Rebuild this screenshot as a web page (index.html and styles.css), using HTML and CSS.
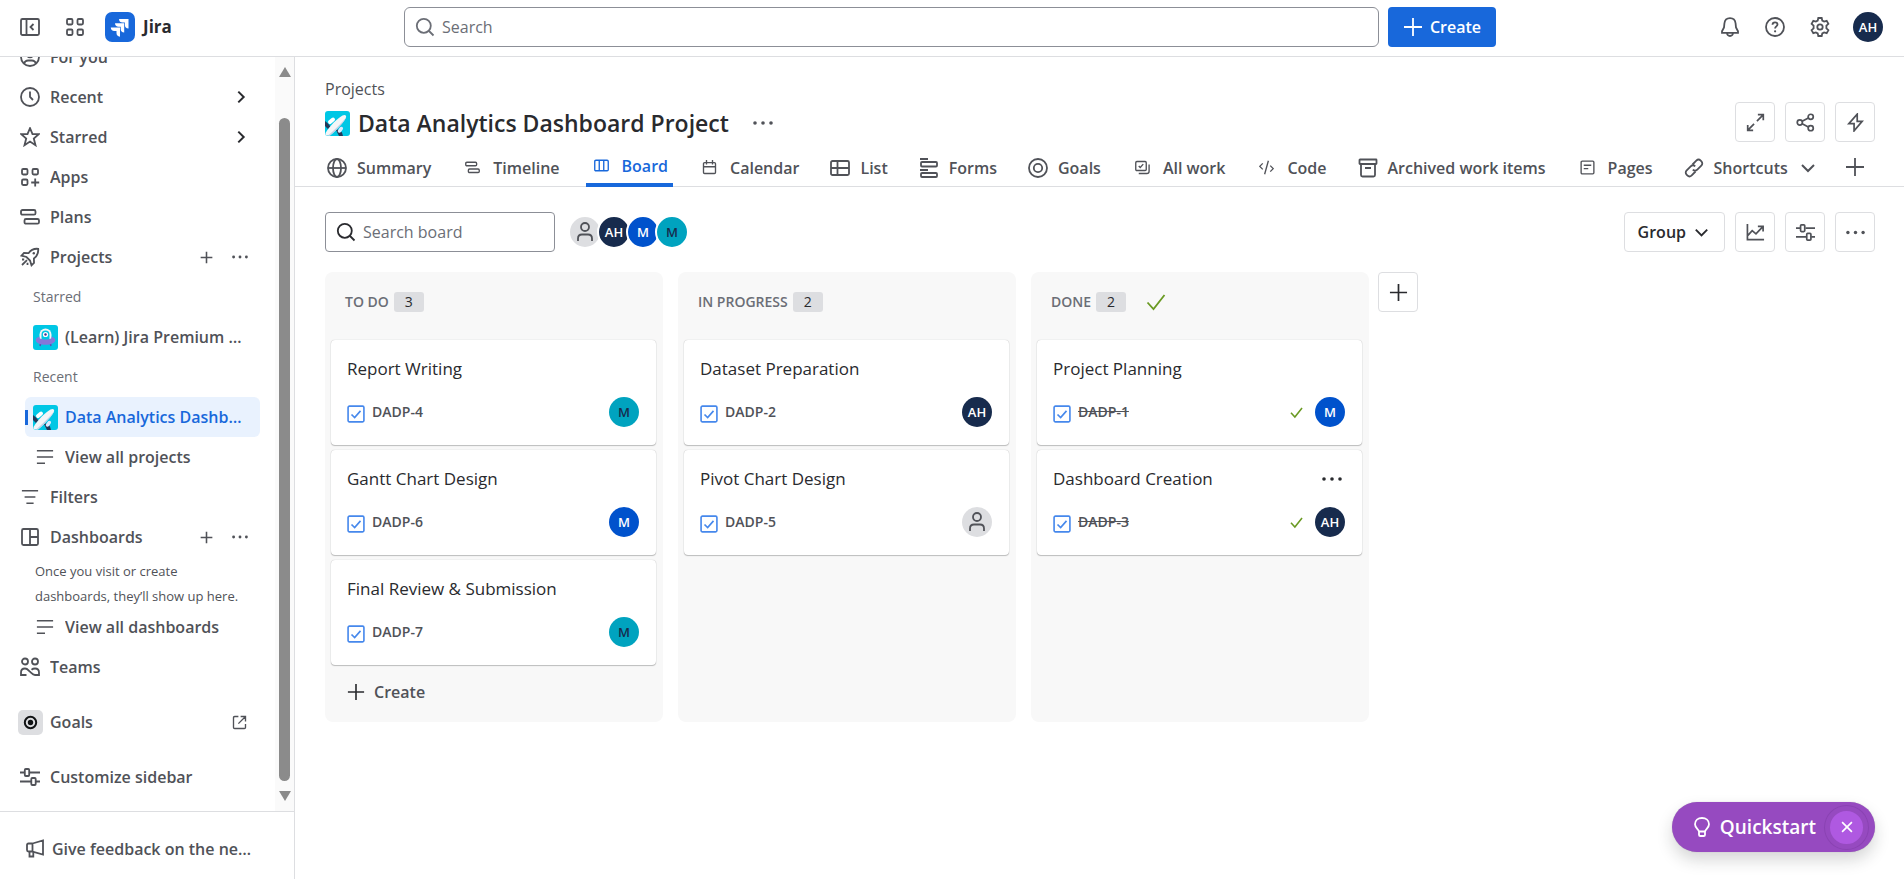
FILE: index.html
```html
<!DOCTYPE html>
<html lang="en">
<head>
<meta charset="utf-8">
<title>Data Analytics Dashboard Project - Board - Jira</title>
<link rel="stylesheet" href="styles.css">
</head>
<body>
<svg class="sprite" aria-hidden="true">
  <symbol id="collapse" viewBox="0 0 20 20"><rect x="1" y="2" width="18" height="16" rx="1.500"/><path d="M6.500 2v16M13.500 7l-3 3 3 3"/></symbol>
  <symbol id="grid" viewBox="0 0 20 20"><rect x="2" y="2" width="5.500" height="5.500" rx="1.200"/><rect x="12.500" y="2" width="5.500" height="5.500" rx="1.200"/><rect x="2" y="12.500" width="5.500" height="5.500" rx="1.200"/><rect x="12.500" y="12.500" width="5.500" height="5.500" rx="1.200"/></symbol>
  <symbol id="apps" viewBox="0 0 20 20"><rect x="2" y="2" width="5.500" height="5.500" rx="1.200"/><rect x="12.500" y="2" width="5.500" height="5.500" rx="1.200"/><rect x="2" y="12.500" width="5.500" height="5.500" rx="1.200"/><path d="M15.200 11.500v8M11.200 15.500h8"/></symbol>
  <symbol id="search" viewBox="0 0 20 20"><circle cx="8.800" cy="8.800" r="7"/><path d="M14 14l4.500 4.500"/></symbol>
  <symbol id="plus" viewBox="0 0 20 20"><path d="M10 1v18M1 10h18"/></symbol>
  <symbol id="bell" viewBox="0 0 20 20"><path d="M10 1.200c-3.400 0-5.300 2.400-5.600 5.300L4 10.500 2 14.300v1.500h16v-1.500l-2-3.800-.4-4C15.300 3.600 13.400 1.200 10 1.200zM7 16c.2 2 1.300 3 3 3s2.800-1 3-3"/></symbol>
  <symbol id="help" viewBox="0 0 20 20"><circle cx="10" cy="10" r="9"/><path d="M7.500 7.800c0-1.600 1.100-2.500 2.500-2.500s2.500.9 2.500 2.200c0 1.900-2.400 1.900-2.400 4"/><circle class="solid" cx="10.100" cy="14.300" r="1.100"/></symbol>
  <symbol id="gear" viewBox="0 0 20 20"><path d="M8.300 1h3.400l.6 2.600 1.800 1 2.600-.8 1.700 3-2 1.900v2.600l2 1.900-1.700 3-2.600-.8-1.800 1-.6 2.600H8.300l-.6-2.600-1.800-1-2.600.8-1.700-3 2-1.900V8.700l-2-1.900 1.700-3 2.600.8 1.800-1z"/><circle cx="10" cy="10" r="2.700"/></symbol>
  <symbol id="person" viewBox="0 0 20 20"><circle cx="10" cy="5" r="4"/><path d="M3 19v-2.500C3 14 4.500 12.500 7 12.500h6c2.500 0 4 1.500 4 4V19"/></symbol>
  <symbol id="foryou" viewBox="0 0 20 20"><circle cx="10" cy="10" r="9"/><circle cx="10" cy="7.500" r="2.800"/><path d="M4 16.500c1-2.500 2.500-3 4-3h4c1.500 0 3 .5 4 3"/></symbol>
  <symbol id="clock" viewBox="0 0 20 20"><circle cx="10" cy="10" r="9"/><path d="M10 4.500V10l3 3"/></symbol>
  <symbol id="star" viewBox="0 0 20 20"><path d="M10 1.200l2.500 6h6.200l-4.900 4.300 1.700 6.700L10 14.500l-5.500 3.700 1.700-6.700L1.300 7.200h6.200z"/></symbol>
  <symbol id="plans" viewBox="0 0 20 20"><rect x="1" y="3" width="14.500" height="4.700" rx="1.500"/><rect x="4.500" y="12" width="14.500" height="4.700" rx="1.500"/></symbol>
  <symbol id="rocket" viewBox="0 0 20 20"><path d="M18.200 1.800c-4.500-.4-7.200.7-9.700 4.400L4 6 1.500 8.700l5 1.300 3.500 3.500 1.500 4.800 2.500-2.500-.1-4.400c3.700-2.500 4.700-5.200 4.300-9.600zM2 12.500h2.200M2 18l5-4.800M7.500 18v-2.200"/><circle class="solid" cx="13.800" cy="6.200" r="1.200"/></symbol>
  <symbol id="lines" viewBox="0 0 20 20"><path d="M1 3h18M1 10h18M1 17h9"/></symbol>
  <symbol id="filter" viewBox="0 0 20 20"><path d="M1 3h18M4 10h12M6 17h8"/></symbol>
  <symbol id="dash" viewBox="0 0 20 20"><rect x="2" y="2" width="16" height="16" rx="1.500"/><path d="M10 2v16M10 10h8"/></symbol>
  <symbol id="teams" viewBox="0 0 20 20"><circle cx="5" cy="4.500" r="3"/><circle cx="15" cy="4.500" r="3"/><path d="M6.500 18H1v-2.500C1 13 2.500 11.500 5 11.500s3 1.300 5 3.200 3 3.300 5 3.300h4v-2.500c0-2.500-1.500-4-4-4-1.500 0-2.500.4-3.500 1.200"/></symbol>
  <symbol id="sliders" viewBox="0 0 20 20"><path d="M0 5.500h4.500M10 5.500h10M0 14.500h11M16 14.500h4"/><rect x="4.800" y="2" width="4.400" height="7" rx="1"/><rect x="11.300" y="11" width="4.400" height="7" rx="1"/></symbol>
  <symbol id="external" viewBox="0 0 20 20"><path d="M8.500 2H3.500C2.500 2 2 2.500 2 3.500v13c0 1 .5 1.500 1.500 1.500h13c1 0 1.500-.5 1.500-1.500v-4.500M11.500 2H18v6.500M18 2l-9.500 9.500"/></symbol>
  <symbol id="mega" viewBox="0 0 20 20"><path d="M7.500 4.500 18 1.500v14l-10.500-3zM7.500 4.500H3.500C2.500 4.500 2 5 2 6v5c0 1 .5 1.500 1.500 1.500h4M4.500 12.500v5h3.800v-4.800M7.500 4.500v8"/></symbol>
  <symbol id="right" viewBox="0 0 20 20"><path d="M7 4l6 6-6 6"/></symbol>
  <symbol id="down" viewBox="0 0 20 20"><path d="M4 7l6 6 6-6"/></symbol>
  <symbol id="dots" viewBox="0 0 20 20"><circle class="solid" cx="2" cy="10" r="1.800"/><circle class="solid" cx="10" cy="10" r="1.800"/><circle class="solid" cx="18" cy="10" r="1.800"/></symbol>
  <symbol id="globe" viewBox="0 0 20 20"><circle cx="10" cy="10" r="9"/><ellipse cx="10" cy="10" rx="4" ry="9"/><path d="M1 10h18"/></symbol>
  <symbol id="columns" viewBox="0 0 20 20"><rect x="1" y="3" width="18" height="14" rx="1.500"/><path d="M7 3v14M13 3v14"/></symbol>
  <symbol id="calendar" viewBox="0 0 20 20"><rect x="2" y="3.500" width="16" height="14.500" rx="1.500"/><path d="M2 9h16M6 0v6M14 0v6"/></symbol>
  <symbol id="list" viewBox="0 0 20 20"><rect x="1" y="3" width="18" height="14" rx="1.500"/><path d="M1 10h18M7.500 3v14"/></symbol>
  <symbol id="forms" viewBox="0 0 20 20"><path d="M1 1h8M1 12h8"/><rect x="2" y="4" width="16" height="4.500" rx="1"/><rect x="2" y="15" width="16" height="4" rx="1"/></symbol>
  <symbol id="goal" viewBox="0 0 20 20"><circle cx="10" cy="10" r="9"/><circle cx="10" cy="10" r="4.200"/></symbol>
  <symbol id="allwork" viewBox="0 0 20 20"><rect x="1" y="2" width="14" height="12" rx="1.500"/><path d="M5 8l2 2 4-4.500M18.800 6v9c0 2-1 3-3 3H5"/></symbol>
  <symbol id="code" viewBox="0 0 20 20"><path d="M5 4.500 1 8.500l4 4M15 7.500l4 4-4 4M12.500 1l-5 18"/></symbol>
  <symbol id="archive" viewBox="0 0 20 20"><rect x="1.500" y="1.500" width="17" height="4.500" rx=".5"/><path d="M3 6v11c0 1 .5 1.500 1.500 1.500h11c1 0 1.500-.5 1.500-1.500V6M7 10h6"/></symbol>
  <symbol id="page" viewBox="0 0 20 20"><rect x="1.500" y="1.500" width="17" height="17" rx="1.500"/><path d="M5 7h10M5 11.500h6"/></symbol>
  <symbol id="link" viewBox="0 0 20 20"><path d="M8.500 6.500l3.800-3.800c1.300-1.300 3.200-1.300 4.400-.1l.7.700c1.200 1.200 1.200 3.100-.1 4.400l-4 4c-1.300 1.300-3.200 1.300-4.500 0M11.500 13.500l-3.800 3.800c-1.300 1.300-3.200 1.300-4.400.1l-.7-.7c-1.200-1.200-1.200-3.100.1-4.400l4-4c1.300-1.300 3.200-1.300 4.500 0"/></symbol>
  <symbol id="expand" viewBox="0 0 20 20"><path d="M12.500 1.800h5.700v5.700M18 2l-6.500 6.500M7.500 18.200H1.800v-5.700M2 18l6.500-6.500"/></symbol>
  <symbol id="share" viewBox="0 0 20 20"><circle cx="4" cy="10" r="2.700"/><circle cx="15.500" cy="4" r="2.700"/><circle cx="15.500" cy="16" r="2.700"/><path d="M6.500 8.800l6.500-3.500M6.500 11.200l6.500 3.500"/></symbol>
  <symbol id="bolt" viewBox="0 0 20 20"><path d="M11.800 1.200v7.600H17L8.500 18.800v-7.600H3z"/></symbol>
  <symbol id="chart" viewBox="0 0 20 20"><path d="M1.500 1v16.500H19M1.500 13.500l5-5.500 4 3.500 7-7.500M12.500 3.500H18V9"/></symbol>
  <symbol id="check" viewBox="0 0 20 20"><path d="M1.500 10.500l6 6.500 11-14"/></symbol>
  <symbol id="task" viewBox="0 0 20 20"><rect x="1.200" y="1.200" width="17.600" height="17.600" rx="1.500"/><path d="M5 10.500l3.500 3.500L15 6.500"/></symbol>
  <symbol id="bulb" viewBox="0 0 20 20"><path d="M7 14.500C6.500 12 3 11 3 7.300 3 3.500 6 1 10 1s7 2.500 7 6.300c0 3.700-3.500 4.700-4 7.200zM7 14.500v3.200c0 1 .4 1.300 1.300 1.300h3.400c.9 0 1.300-.3 1.300-1.300v-3.200"/></symbol>
  <symbol id="close" viewBox="0 0 20 20"><path d="M3 3l14 14M17 3L3 17"/></symbol>
  <symbol id="plane" viewBox="0 0 25 25"><rect class="sky" width="25" height="25" rx="3"/><path fill="#253858" d="M0 10l3 2.500 2.500 3L3 18l-3-3zM11 19l2.500-.5 3.500 3 1 3.500h-4z"/><path stroke="#fff" stroke-width="4" stroke-linecap="round" d="M5 11l3-2.500"/><path stroke="#deebff" stroke-width="3.500" stroke-linecap="round" d="M14.500 20l1.800-2.500"/><path fill="#f4f5f7" d="M.5 24.500V22C5 15 11.500 8 17.500 4.600c2.800-1.500 4.500 0 3.200 2.700C17.500 13 10.500 20 5 24.500z"/><path fill="#c5d0e6" d="M3 24.500C9.500 19 16 12.500 20.800 7 17.500 13 10.500 20 5 24.500z"/></symbol>
  <symbol id="ufo" viewBox="0 0 25 25"><rect class="sky" width="25" height="25" rx="3"/><path stroke="#5e4db2" stroke-width="1.500" d="M8 17l-1 4M17 17l1 4"/><path fill="#f4f5f7" d="M6.500 14V9.500a6 6 0 0 1 12 0V14z"/><path fill="#00c7e5" d="M8.500 14V9.500a4 4 0 0 1 8 0V14z"/><path fill="#8777d9" d="M6.500 11.500C4 12.300 2.700 13.600 2.700 15c0 2.700 4.400 4.800 9.800 4.800s9.800-2.100 9.800-4.800c0-1.400-1.300-2.700-3.800-3.500v1.700c-2.500 1.700-9.500 1.700-12 0z"/><circle cx="12.500" cy="9.500" r="2.600" fill="#fff"/><circle cx="12.500" cy="9.500" r="1.200" fill="#403294"/></symbol>
</svg>

<header class="topbar">
  <div class="brand">
    <button class="plain" aria-label="Collapse sidebar"><svg class="icon"><use href="#collapse"/></svg></button>
    <button class="plain" aria-label="Switch apps"><svg class="icon"><use href="#grid"/></svg></button>
    <a class="logo" href="#"><svg class="logo-mark" viewBox="0 0 30 30"><rect width="30" height="30" rx="7"/><path d="M14 7h9.500v9.500c-2.400 0-3.600-1.500-3.600-3.600v-2.300h-2.300C15.500 10.600 14 9.400 14 7z"/><path d="M10 11.200h9.200v9.300c-2.300 0-3.500-1.500-3.500-3.600v-2.200h-2.200c-2.100 0-3.500-1.200-3.500-3.500z"/><path d="M5.800 15.400H15v9.300c-2.300 0-3.500-1.500-3.500-3.600v-2.200H9.300c-2.100 0-3.500-1.200-3.500-3.500z"/></svg>Jira</a>
  </div>
  <div class="top-middle">
    <label class="field top-search"><svg class="icon"><use href="#search"/></svg><input type="search" placeholder="Search" aria-label="Search"></label>
    <button class="create"><svg class="icon"><use href="#plus"/></svg>Create</button>
  </div>
  <div class="top-actions">
    <button class="plain" aria-label="Notifications"><svg class="icon"><use href="#bell"/></svg></button>
    <button class="plain" aria-label="Help"><svg class="icon"><use href="#help"/></svg></button>
    <button class="plain" aria-label="Settings"><svg class="icon"><use href="#gear"/></svg></button>
    <button class="avatar navy" aria-label="Your profile">AH</button>
  </div>
</header>

<div class="shell">
  <aside class="sidebar">
    <div class="side-scroll">
      <nav class="side-nav" aria-label="Sidebar">
        <a class="item" href="#"><svg class="icon"><use href="#foryou"/></svg><span>For you</span></a>
        <a class="item" href="#"><svg class="icon"><use href="#clock"/></svg><span>Recent</span><svg class="icon chevron"><use href="#right"/></svg></a>
        <a class="item" href="#"><svg class="icon"><use href="#star"/></svg><span>Starred</span><svg class="icon chevron"><use href="#right"/></svg></a>
        <a class="item" href="#"><svg class="icon"><use href="#apps"/></svg><span>Apps</span></a>
        <a class="item" href="#"><svg class="icon"><use href="#plans"/></svg><span>Plans</span></a>
        <div class="item"><svg class="icon"><use href="#rocket"/></svg><a href="#">Projects</a><button class="plain" aria-label="Create project"><svg class="icon mini"><use href="#plus"/></svg></button><button class="plain" aria-label="More project actions"><svg class="icon mini-dots"><use href="#dots"/></svg></button></div>
        <h2 class="group">Starred</h2>
        <a class="item nested" href="#"><svg class="project-icon"><use href="#ufo"/></svg><span>(Learn) Jira Premium benefits</span></a>
        <h2 class="group">Recent</h2>
        <a class="item nested selected" href="#" aria-current="page"><svg class="project-icon"><use href="#plane"/></svg><span>Data Analytics Dashboard Project</span></a>
        <a class="item nested" href="#"><svg class="icon line-icon"><use href="#lines"/></svg><span>View all projects</span></a>
        <a class="item" href="#"><svg class="icon line-icon"><use href="#filter"/></svg><span>Filters</span></a>
        <div class="item"><svg class="icon"><use href="#dash"/></svg><a href="#">Dashboards</a><button class="plain" aria-label="Create dashboard"><svg class="icon mini"><use href="#plus"/></svg></button><button class="plain" aria-label="More dashboard actions"><svg class="icon mini-dots"><use href="#dots"/></svg></button></div>
        <p class="hint">Once you visit or create dashboards, they’ll show up here.</p>
        <a class="item nested" href="#"><svg class="icon line-icon"><use href="#lines"/></svg><span>View all dashboards</span></a>
        <a class="item" href="#"><svg class="icon"><use href="#teams"/></svg><span>Teams</span></a>
        <a class="item spaced" href="#"><svg class="goal-tile" viewBox="0 0 25 25"><rect width="25" height="25" rx="5" fill="#dddee1"/><circle cx="12.500" cy="12.500" r="5.700" fill="none" stroke="#101214" stroke-width="2"/><circle cx="12.500" cy="12.500" r="2.700" fill="#101214"/></svg><span>Goals</span><svg class="icon small open"><use href="#external"/></svg></a>
        <a class="item spaced" href="#"><svg class="icon"><use href="#sliders"/></svg><span>Customize sidebar</span></a>
      </nav>
      <div class="scrollbar" aria-hidden="true"><i class="arrow up"></i><i class="thumb"></i><i class="arrow down"></i></div>
    </div>
    <a class="feedback" href="#"><svg class="icon"><use href="#mega"/></svg><span>Give feedback on the new navigation</span></a>
  </aside>

  <main class="main">
    <div class="heading">
      <div>
        <a class="crumb" href="#">Projects</a>
        <div class="title-row"><svg class="project-icon"><use href="#plane"/></svg><h1>Data Analytics Dashboard Project</h1><button class="plain" aria-label="More actions"><svg class="icon"><use href="#dots"/></svg></button></div>
      </div>
      <div class="buttons">
        <button class="square" aria-label="Full screen"><svg class="icon"><use href="#expand"/></svg></button>
        <button class="square" aria-label="Share"><svg class="icon"><use href="#share"/></svg></button>
        <button class="square" aria-label="Automation"><svg class="icon"><use href="#bolt"/></svg></button>
      </div>
    </div>
    <nav class="tabs" aria-label="Project views">
      <a href="#"><svg class="icon"><use href="#globe"/></svg>Summary</a>
      <a href="#"><svg class="icon small"><use href="#plans"/></svg>Timeline</a>
      <a class="active" href="#" aria-current="page"><svg class="icon small"><use href="#columns"/></svg>Board</a>
      <a href="#"><svg class="icon small"><use href="#calendar"/></svg>Calendar</a>
      <a href="#"><svg class="icon"><use href="#list"/></svg>List</a>
      <a href="#"><svg class="icon"><use href="#forms"/></svg>Forms</a>
      <a href="#"><svg class="icon"><use href="#goal"/></svg>Goals</a>
      <a href="#"><svg class="icon small"><use href="#allwork"/></svg>All work</a>
      <a href="#"><svg class="icon small"><use href="#code"/></svg>Code</a>
      <a href="#"><svg class="icon"><use href="#archive"/></svg>Archived work items</a>
      <a href="#"><svg class="icon small"><use href="#page"/></svg>Pages</a>
      <a href="#"><svg class="icon"><use href="#link"/></svg>Shortcuts<svg class="icon caret"><use href="#down"/></svg></a>
      <button class="plain" aria-label="Add view"><svg class="icon"><use href="#plus"/></svg></button>
    </nav>
    <div class="toolbar">
      <label class="field board-search"><svg class="icon"><use href="#search"/></svg><input type="search" placeholder="Search board" aria-label="Search board"></label>
      <div class="people">
        <button class="avatar grey" aria-label="Unassigned"><svg class="icon"><use href="#person"/></svg></button>
        <button class="avatar navy">AH</button>
        <button class="avatar blue">M</button>
        <button class="avatar teal">M</button>
      </div>
      <div class="buttons">
        <button class="square group-by">Group<svg class="icon caret"><use href="#down"/></svg></button>
        <button class="square" aria-label="Insights"><svg class="icon"><use href="#chart"/></svg></button>
        <button class="square" aria-label="View settings"><svg class="icon"><use href="#sliders"/></svg></button>
        <button class="square" aria-label="More"><svg class="icon"><use href="#dots"/></svg></button>
      </div>
    </div>
    <div class="board">
      <section class="column">
        <h2 class="column-head">To do<span class="count">3</span></h2>
        <article class="card"><h3>Report Writing</h3><div class="meta"><svg class="icon task"><use href="#task"/></svg><a href="#">DADP-4</a><span class="avatar teal">M</span></div></article>
        <article class="card"><h3>Gantt Chart Design</h3><div class="meta"><svg class="icon task"><use href="#task"/></svg><a href="#">DADP-6</a><span class="avatar blue">M</span></div></article>
        <article class="card"><h3>Final Review &amp; Submission</h3><div class="meta"><svg class="icon task"><use href="#task"/></svg><a href="#">DADP-7</a><span class="avatar teal">M</span></div></article>
        <button class="add-card"><svg class="icon"><use href="#plus"/></svg>Create</button>
      </section>
      <section class="column">
        <h2 class="column-head">In progress<span class="count">2</span></h2>
        <article class="card"><h3>Dataset Preparation</h3><div class="meta"><svg class="icon task"><use href="#task"/></svg><a href="#">DADP-2</a><span class="avatar navy">AH</span></div></article>
        <article class="card"><h3>Pivot Chart Design</h3><div class="meta"><svg class="icon task"><use href="#task"/></svg><a href="#">DADP-5</a><span class="avatar grey"><svg class="icon"><use href="#person"/></svg></span></div></article>
      </section>
      <section class="column">
        <h2 class="column-head">Done<span class="count">2</span><svg class="icon done-mark"><use href="#check"/></svg></h2>
        <article class="card done"><h3>Project Planning</h3><div class="meta"><svg class="icon task"><use href="#task"/></svg><a href="#">DADP-1</a><svg class="icon done-small"><use href="#check"/></svg><span class="avatar blue">M</span></div></article>
        <article class="card done"><h3>Dashboard Creation<button class="plain" aria-label="Card actions"><svg class="icon"><use href="#dots"/></svg></button></h3><div class="meta"><svg class="icon task"><use href="#task"/></svg><a href="#">DADP-3</a><svg class="icon done-small"><use href="#check"/></svg><span class="avatar navy">AH</span></div></article>
      </section>
      <button class="square add-column" aria-label="Create column"><svg class="icon"><use href="#plus"/></svg></button>
    </div>
  </main>
</div>
<div class="quickstart"><button class="quick-open"><svg class="icon"><use href="#bulb"/></svg>Quickstart</button><button class="quick-close" aria-label="Dismiss Quickstart"><svg class="icon"><use href="#close"/></svg></button></div>
</body>
</html>
```
FILE: styles.css
```css
:root {
  --text: #292a2e;
  --subtle: #505258;
  --faint: #6b6e76;
  --line: #dddee1;
  --brand: #1868db;
}
* { box-sizing: border-box; }
body {
  margin: 0;
  height: 100vh;
  display: flex;
  flex-direction: column;
  overflow: hidden;
  color: var(--text);
  background: #fff;
  font: 400 16px/24px "Open Sans", "Noto Sans", sans-serif;
}
h1, h2, h3, p { margin: 0; font-weight: inherit; }
a { color: inherit; text-decoration: none; }
button, input { font: inherit; color: inherit; }
button { cursor: pointer; }
.sprite { display: none; }
.sky { fill: #00c7e5; }
.icon {
  width: 20px;
  height: 20px;
  flex: none;
  fill: none;
  stroke: currentColor;
  stroke-width: 1.8;
}
.icon.small { width: 15px; height: 15px; }
.solid { fill: currentColor; stroke: none; }
.plain {
  display: flex;
  align-items: center;
  justify-content: center;
  padding: 0;
  border: 0;
  background: none;
  color: var(--subtle);
}
.project-icon { width: 25px; height: 25px; flex: none; }

/* Top bar */
.topbar {
  flex: none;
  display: grid;
  grid-template-columns: 1fr minmax(0, 1092px) 1fr;
  align-items: center;
  height: 57px;
  padding: 0 21px 2px 17px;
  border-bottom: 1px solid var(--line);
}
.brand, .top-middle, .top-actions { display: flex; align-items: center; }
.brand { padding-left: 3px; }
.brand .plain + .plain { margin: 0 20px 0 25px; }
.logo { display: flex; align-items: center; gap: 8px; font-size: 17px; font-weight: 700; }
.logo-mark { width: 30px; height: 30px; fill: #fff; }
.logo-mark rect { fill: var(--brand); }
.field {
  display: flex;
  align-items: center;
  gap: 7px;
  height: 40px;
  padding: 0 10px;
  border: 1px solid #8c8f97;
  border-radius: 4px;
}
.field input { flex: 1; min-width: 0; padding: 0; border: 0; outline: 0; background: none; }
.field input::placeholder { color: var(--faint); opacity: 1; }
.top-middle { gap: 9px; }
.top-search { flex: 1; border-radius: 6px; color: var(--faint); }
.create {
  display: flex;
  align-items: center;
  gap: 7px;
  height: 40px;
  padding: 0 15px;
  border: 0;
  border-radius: 4px;
  color: #fff;
  background: var(--brand);
  font-weight: 600;
}
.top-actions { justify-content: flex-end; gap: 25px; }
.top-actions .avatar { margin-left: -2px; }
.avatar {
  display: flex;
  align-items: center;
  justify-content: center;
  flex: none;
  width: 30px;
  height: 30px;
  padding: 0;
  border: 0;
  border-radius: 50%;
  color: #fff;
  font: 600 13px/30px "Open Sans", sans-serif;
}
.avatar.navy { background: #172b4d; }
.avatar.blue { background: #0052cc; }
.avatar.teal { background: #00a3bf; color: #172b4d; }
.avatar.grey { background: var(--line); color: var(--subtle); }

/* Sidebar */
.shell { flex: 1; min-height: 0; display: flex; }
.sidebar {
  flex: none;
  display: flex;
  flex-direction: column;
  width: 295px;
  border-right: 1px solid var(--line);
  color: var(--subtle);
  font-weight: 600;
}
.side-scroll { flex: 1; min-height: 0; display: flex; overflow: hidden; }
.side-nav {
  flex: 1;
  min-width: 0;
  display: flex;
  flex-direction: column;
  justify-content: flex-end;
  padding: 0 15px 14px 10px;
}
.item {
  flex: none;
  display: flex;
  align-items: center;
  gap: 10px;
  height: 40px;
  padding: 0 10px;
}
.item > span, .item > a { flex: 1; min-width: 0; overflow: hidden; text-overflow: ellipsis; white-space: nowrap; }
.item .mini { width: 13px; height: 13px; stroke-width: 2.4; }
.item .mini-dots { width: 16px; height: 16px; }
.item .plain { width: 24px; }
.item .plain:last-child { margin-right: -2px; }
.item .chevron { width: 18px; height: 18px; color: var(--text); stroke-width: 2.2; }
.item .line-icon { padding: 1px; }
.item.nested { margin-left: 15px; gap: 7px; padding: 0 11px 0 8px; }
.item.nested .line-icon { margin: 0 3px 0 2px; }
.item.selected {
  border-radius: 6px;
  color: var(--brand);
  background: linear-gradient(var(--brand), var(--brand)) 0 50% / 3px 15px no-repeat #e9f2fe;
}
.item.spaced { margin-top: 15px; }
.goal-tile { width: 25px; height: 25px; margin: 0 -3px 0 -2px; flex: none; }
.item .open { margin-right: 3px; }
.group { flex: none; padding-left: 23px; color: var(--faint); font-size: 14px; line-height: 40px; font-weight: 400; }
.hint { flex: none; padding: 2px 20px 0 25px; font-size: 13px; line-height: 25px; font-weight: 400; margin-bottom: -2px; }
.scrollbar {
  flex: none;
  display: flex;
  flex-direction: column;
  align-items: center;
  width: 19px;
  padding: 10px 0;
  background: #fafafa;
}
.arrow { border: 6px solid transparent; }
.arrow.up { border-top: 0; border-bottom: 10px solid #8b8b8b; }
.arrow.down { border-bottom: 0; border-top: 10px solid #8b8b8b; }
.thumb { flex: 1; width: 11px; margin: 41px 0 10px; border-radius: 6px; background: #8b8b8b; }
.feedback {
  flex: none;
  display: flex;
  align-items: center;
  gap: 7px;
  height: 68px;
  padding: 6px 34px 0 25px;
  border-top: 1px solid var(--line);
}
.feedback span { overflow: hidden; text-overflow: ellipsis; white-space: nowrap; }

/* Project header */
.main { flex: 1; min-width: 0; display: flex; flex-direction: column; }
.heading { display: flex; justify-content: space-between; align-items: flex-end; padding: 20px 29px 0 30px; }
.crumb { display: block; line-height: 24px; color: var(--subtle); }
.title-row { display: flex; align-items: center; gap: 8px; height: 44px; }
.title-row h1 { font-size: 23px; line-height: 32px; font-weight: 600; }
.title-row .plain { margin-left: 16px; }
.buttons { display: flex; gap: 10px; }
.square {
  display: flex;
  align-items: center;
  justify-content: center;
  flex: none;
  width: 40px;
  height: 40px;
  padding: 0;
  border: 1px solid var(--line);
  border-radius: 4px;
  background: #fff;
  color: var(--subtle);
}
.square .icon { width: 19px; height: 19px; }
.heading .buttons { padding-bottom: 3px; }
.tabs {
  display: flex;
  gap: 21px;
  padding: 0 39px 0 27px;
  height: 42px;
  border-bottom: 1px solid var(--line);
  color: var(--subtle);
  font-weight: 600;
  white-space: nowrap;
}
.tabs a { display: flex; align-items: center; gap: 10px; padding: 3px 5px 0; height: 42px; }
.tabs .small { margin: 0 3px; }
.tabs .active { color: var(--brand); border-bottom: 4px solid var(--brand); }
.caret { stroke-width: 2; }
.tabs button { padding: 3px 0 0; margin-left: auto; }

/* Board */
.toolbar { display: flex; align-items: center; padding: 25px 29px 20px 30px; }
.board-search { width: 230px; }
.people { display: flex; margin-left: 13px; }
.people .avatar { width: 34px; height: 34px; margin-right: -5px; border: 2px solid #fff; }
.avatar.grey .icon { width: 20px; height: 20px; }
.toolbar .buttons { margin-left: auto; }
.group-by { width: auto; gap: 6px; padding: 0 13px; color: var(--text); font-weight: 600; }
.board { display: flex; gap: 15px; padding: 0 30px; }
.column {
  width: 338px;
  min-height: 450px;
  padding: 0 7px 8px 6px;
  border-radius: 8px;
  background: #f8f8f8;
}
.column-head {
  display: flex;
  align-items: center;
  height: 60px;
  margin-bottom: 8px;
  padding-left: 14px;
  color: var(--faint);
  font-size: 14px;
  font-weight: 600;
  text-transform: uppercase;
}
.count { width: 30px; margin-left: 5px; border-radius: 3px; background: var(--line); color: var(--text); line-height: 20px; text-align: center; font-weight: 400; }
.done-mark { margin-left: 20px; color: #6a9a23; }
.card {
  height: 105px;
  margin-bottom: 5px;
  padding: 17px 17px 0 16px;
  border-radius: 4px;
  background: #fff;
  box-shadow: 0 1px 1px rgba(30, 31, 33, .25), 0 0 1px rgba(30, 31, 33, .31);
}
.card h3 { display: flex; justify-content: space-between; font-size: 17px; line-height: 24px; }
.card h3 .plain { color: var(--text); margin-right: 3px; }
.meta { display: flex; align-items: center; height: 30px; margin-top: 16px; font-size: 14px; font-weight: 600; color: var(--subtle); }
.meta a { margin: 0 auto 0 7px; }
.done .meta a { text-decoration: line-through; }
.task { width: 18px; height: 18px; margin-top: 3px; color: #4688ec; }
.meta .avatar { margin-left: 12px; }
.done-small { width: 13px; height: 13px; color: #6a9a23; stroke-width: 2.4; }
.add-card { display: flex; align-items: center; gap: 9px; width: 100%; height: 44px; padding: 0 16px; border: 0; background: none; color: var(--subtle); font-weight: 600; }
.add-card .icon { width: 18px; height: 18px; color: var(--text); }
.add-column { margin-left: -6px; color: var(--text); }

/* Quickstart launcher floats above the board */
.quickstart {
  position: absolute;
  right: 29px;
  bottom: 27px;
  display: flex;
  align-items: center;
  height: 50px;
  padding-right: 7px;
  border-radius: 25px;
  color: #fff;
  background: #964ac0;
  box-shadow: 0 8px 16px rgba(30, 31, 33, .18), 0 0 1px rgba(30, 31, 33, .3);
}
.quick-open { display: flex; align-items: center; gap: 8px; padding: 0 9px 0 20px; border: 0; background: none; font-size: 19px; font-weight: 600; }
.quick-close {
  display: flex;
  align-items: center;
  justify-content: center;
  width: 43px;
  height: 43px;
  padding: 0;
  border: 5px solid #964ac0;
  border-radius: 50%;
  background: #af59e1;
  box-shadow: 0 0 0 1px #8a43b2;
}
.quick-close .icon { width: 14px; height: 14px; stroke-width: 2.4; }
```
